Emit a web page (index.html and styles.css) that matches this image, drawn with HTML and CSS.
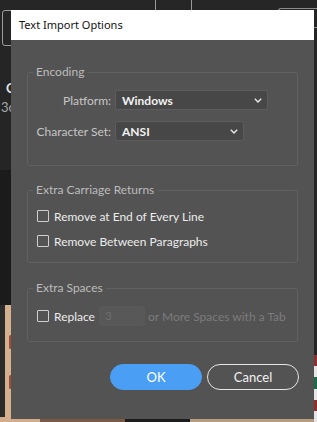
FILE: index.html
```html
<!DOCTYPE html>
<html>
<head>
<meta charset="utf-8">
<link rel="stylesheet" href="styles.css">
</head>
<body>
<div class="backdrop">
  <div class="bg-top"><span class="bg-line bg-line-a"></span><span class="bg-line bg-line-b"></span><span class="bg-tab"></span></div>
  <div class="bg-frame"></div>
  <div class="bg-title">C</div>
  <div class="bg-sub">3c</div>
  <div class="bg-dark"></div>
  <div class="bg-photo"><span class="spot spot-a"></span><span class="spot spot-b"></span></div>
  <div class="bg-bottom"><span class="bb bb-1"></span><span class="bb bb-2"></span><span class="bb bb-3"></span><span class="bb bb-4"></span></div>
  <div class="bg-flag"><span class="st st-red"></span><span class="st st-white"></span><span class="st st-green"></span><span class="st st-white"></span><span class="st st-red"></span><span class="st st-white"></span></div>
</div>

<div class="dialog">
  <div class="titlebar">Text Import Options</div>
  <div class="dialog-body">
    <fieldset class="group group-encoding">
      <legend>Encoding</legend>
      <div class="form-grid">
        <label class="field-label">Platform:</label>
        <div class="select select-wide"><span>Windows</span><svg class="chev" width="8" height="5" viewBox="0 0 8 5"><polyline points="0.8,0.8 4,4 7.2,0.8" fill="none" stroke="#e8e8e8" stroke-width="1.4"/></svg></div>
        <label class="field-label">Character Set:</label>
        <div class="select select-narrow"><span>ANSI</span><svg class="chev" width="8" height="5" viewBox="0 0 8 5"><polyline points="0.8,0.8 4,4 7.2,0.8" fill="none" stroke="#e8e8e8" stroke-width="1.4"/></svg></div>
      </div>
    </fieldset>

    <fieldset class="group group-returns">
      <legend>Extra Carriage Returns</legend>
      <div class="check-list">
        <div class="check-row"><span class="checkbox"></span><span class="check-text">Remove at End of Every Line</span></div>
        <div class="check-row"><span class="checkbox"></span><span class="check-text">Remove Between Paragraphs</span></div>
      </div>
    </fieldset>

    <fieldset class="group group-spaces">
      <legend>Extra Spaces</legend>
      <div class="check-row replace-row">
        <span class="checkbox"></span><span class="check-text">Replace</span>
        <span class="num-input">3</span>
        <span class="dim-text">or More Spaces with a Tab</span>
      </div>
    </fieldset>

    <div class="actions">
      <button class="btn btn-primary">OK</button>
      <button class="btn btn-secondary">Cancel</button>
    </div>
  </div>
</div>
</body>
</html>
```

FILE: styles.css
```css
html, body {
  margin: 0;
  padding: 0;
}
body {
  position: relative;
  width: 317px;
  height: 422px;
  overflow: hidden;
  background: #232323;
  font-family: "Lato", "Noto Sans", sans-serif;
}

/* ---------- backdrop (app behind the modal) ---------- */
.backdrop {
  position: absolute;
  inset: 0;
  overflow: hidden;
  background: #252525;
}
.bg-top {
  position: absolute;
  left: 0; top: 0; right: 0;
  height: 10px;
  background: #262626;
}
.bg-line {
  position: absolute;
  top: 0;
  width: 1px;
  height: 10px;
  background: #9a9a9a;
}
.bg-line-a { left: 155px; }
.bg-line-b { left: 191px; }
.bg-tab {
  position: absolute;
  left: 278px;
  top: 8px;
  width: 39px;
  height: 20px;
  border: 1px solid #8c8c8c;
  border-right: none;
  border-radius: 3px 0 0 3px;
  box-sizing: border-box;
}
.bg-frame {
  position: absolute;
  left: 2px;
  top: 10px;
  width: 24px;
  height: 36px;
  border: 1px solid #9c9c9c;
  border-radius: 3px;
  box-sizing: border-box;
}
.bg-title {
  position: absolute;
  left: 6px;
  top: 80px;
  font: bold 13px "Lato", sans-serif;
  color: #e4e4e4;
}
.bg-sub {
  position: absolute;
  left: 1px;
  top: 99px;
  font: 13px "Lato", sans-serif;
  color: #a8a8a8;
}
.bg-dark {
  position: absolute;
  left: 0;
  top: 170px;
  width: 20px;
  height: 135px;
  background: #1b1b1b;
}
.bg-photo {
  position: absolute;
  left: 0;
  top: 305px;
  width: 20px;
  height: 117px;
  background: linear-gradient(90deg, #2b2b2b 0 5px, #d6b190 5px);
}
.spot {
  position: absolute;
  left: 9px;
  width: 3px;
  height: 14px;
  background: #a34a3a;
  border-radius: 2px;
}
.spot-a { top: 30px; }
.spot-b { top: 70px; }
.bg-bottom {
  position: absolute;
  left: 0; right: 0; bottom: 0;
  height: 5px;
  display: flex;
}
.bb { height: 5px; }
.bb-1 { width: 40px; background: #d2ad8c; }
.bb-2 { width: 85px; background: #7a5a45; }
.bb-3 { width: 65px; background: #1c1c1c; }
.bb-4 { flex: 1; background: #b89a7e; }
.bg-flag {
  position: absolute;
  right: 0;
  top: 355px;
  width: 3px;
  height: 67px;
  display: flex;
  flex-direction: column;
}
.st { display: block; flex: 1; }
.st-red { background: #8e2f2f; }
.st-white { background: #e6e6e6; }
.st-green { background: #1f6a4a; }

/* ---------- dialog ---------- */
.dialog {
  position: absolute;
  left: 11px;
  top: 10px;
  width: 303px;
  height: 409px;
  background: #535353;
  display: flex;
  flex-direction: column;
}
.titlebar {
  height: 30px;
  line-height: 30px;
  background: #ffffff;
  color: #111111;
  font-family: "Noto Sans", "Open Sans", sans-serif;
  font-size: 11px;
  padding-left: 8px;
}
.dialog-body {
  padding: 24px 16px 0;
  display: flex;
  flex-direction: column;
}

.group {
  margin: 0;
  border: 1px solid #616161;
  border-radius: 3px;
  padding: 10px 8px 24px;
  min-width: 0;
}
.group legend {
  padding: 0 3px;
  margin-left: -3px;
  font-size: 12px;
  line-height: 16px;
  color: #bcbcbc;
}
.group-returns {
  margin-top: 16px;
  padding: 9px 8px 12px;
}
.group-spaces {
  margin-top: 17px;
  padding: 10px 8px 15px;
}

.form-grid {
  display: grid;
  grid-template-columns: 75px auto;
  column-gap: 4px;
  row-gap: 11px;
  align-items: center;
  justify-items: start;
}
.field-label {
  justify-self: end;
  white-space: nowrap;
  font-size: 12px;
  color: #c6c6c6;
}
.select {
  box-sizing: border-box;
  height: 20px;
  display: flex;
  align-items: center;
  justify-content: space-between;
  padding: 0 5px 0 6px;
  background: #474747;
  border: 1px solid #5d5d5d;
  border-radius: 3px;
  font-size: 12px;
  font-weight: 700;
  color: #f2f2f2;
}
.select-wide { width: 153px; }
.select-narrow { width: 129px; }
.chev { display: block; }

.check-list {
  display: flex;
  flex-direction: column;
  gap: 7px;
}
.check-row {
  height: 18px;
  display: flex;
  align-items: center;
  padding-left: 1px;
}
.checkbox {
  box-sizing: border-box;
  width: 12px;
  height: 12px;
  border: 1px solid #cfcfcf;
  border-radius: 1px;
  margin-right: 5px;
  flex: none;
}
.check-text {
  font-size: 12px;
  color: #ececec;
  white-space: nowrap;
}
.replace-row {
  height: 20px;
}
.num-input {
  box-sizing: border-box;
  width: 46px;
  height: 20px;
  margin: 0 3px 0 4px;
  padding-left: 6px;
  background: #585858;
  border-radius: 2px;
  font-size: 12px;
  line-height: 20px;
  color: #6e6e6e;
}
.dim-text {
  font-size: 12px;
  color: #7c7c7c;
  white-space: nowrap;
}

.actions {
  margin-top: 22px;
  margin-right: -1px;
  display: flex;
  justify-content: flex-end;
  gap: 5px;
}
.btn {
  box-sizing: border-box;
  width: 92px;
  height: 26px;
  border-radius: 13px;
  font-family: "Lato", "Noto Sans", sans-serif;
  font-size: 13px;
  padding: 0;
  cursor: pointer;
}
.btn-primary {
  background: #4a9ff5;
  border: 1px solid #4a9ff5;
  color: #ffffff;
}
.btn-secondary {
  background: transparent;
  border: 1px solid #e6e6e6;
  color: #f2f2f2;
}
```
